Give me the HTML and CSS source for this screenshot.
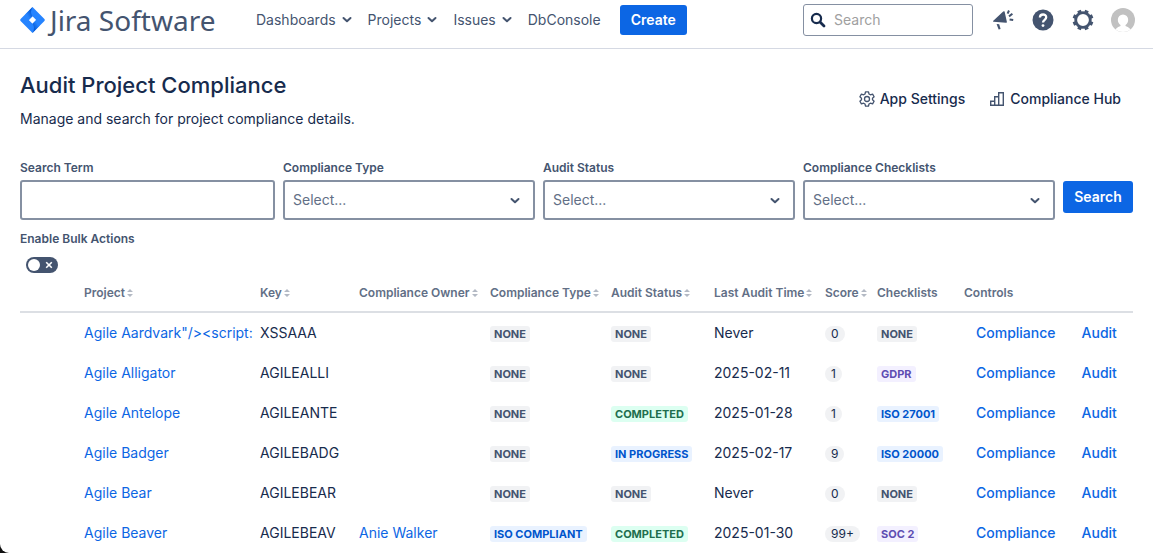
FILE: index.html
```html
<!DOCTYPE html>
<html lang="en">
<head>
    <meta charset="UTF-8">
    <meta name="viewport" content="width=device-width, initial-scale=1.0">
    <title>Audit Project Compliance - Jira Software</title>
    <link rel="stylesheet" href="styles.css">
</head>
<body>
    <!-- Shared icons -->
    <svg class="sprite" aria-hidden="true">
        <symbol id="chevron" viewBox="0 0 10 8">
            <path d="M1.5 2 L5 5.3 L8.5 2" fill="none" stroke="currentColor" stroke-width="2" stroke-linecap="round" stroke-linejoin="round"/>
        </symbol>
        <symbol id="sort" viewBox="0 0 6 8">
            <path d="M3 0 L6 3 H0 Z M3 8 L0 5 H6 Z" fill="currentColor"/>
        </symbol>
    </svg>

    <!-- Top navigation -->
    <header class="topbar">
        <a class="logo" href="#">
            <svg width="25" height="26" viewBox="0 0 25 26">
                <defs>
                    <linearGradient id="g1" x1="0.9" y1="0" x2="0.3" y2="0.7">
                        <stop offset="0.2" stop-color="#0052cc"/>
                        <stop offset="1" stop-color="#2684ff"/>
                    </linearGradient>
                    <linearGradient id="g2" x1="0.1" y1="1" x2="0.7" y2="0.3">
                        <stop offset="0.2" stop-color="#0052cc"/>
                        <stop offset="1" stop-color="#2684ff"/>
                    </linearGradient>
                </defs>
                <path d="M12.5 0 L24.4 12 Q25.2 13 24.4 14 L12.5 26 L0.6 14 Q-0.2 13 0.6 12 Z M12.5 9.3 L8.8 13 L12.5 16.7 L16.2 13 Z" fill="#2684ff" fill-rule="evenodd"/>
                <path d="M12.5 0 Q9.5 5 12.5 9.3 L8.8 13 L5.5 7.2 Z" fill="url(#g1)"/>
                <path d="M12.5 26 Q15.5 21 12.5 16.7 L16.2 13 L19.5 18.8 Z" fill="url(#g2)"/>
            </svg>
            <span>Jira Software</span>
        </a>
        <nav>
            <a href="#">Dashboards <svg class="chevron"><use href="#chevron"/></svg></a>
            <a href="#">Projects <svg class="chevron"><use href="#chevron"/></svg></a>
            <a href="#">Issues <svg class="chevron"><use href="#chevron"/></svg></a>
            <a href="#">DbConsole</a>
        </nav>
        <button class="button create">Create</button>
        <div class="tools">
            <div class="quick-search">
                <svg width="16" height="16" viewBox="0 0 16 16">
                    <circle cx="6.5" cy="6.5" r="4.6" fill="none" stroke="#172b4d" stroke-width="2.2"/>
                    <path d="M10 10 L14 14" stroke="#172b4d" stroke-width="2.8" stroke-linecap="round"/>
                </svg>
                <input type="text" placeholder="Search" aria-label="Quick search">
            </div>
            <a href="#" aria-label="Feedback">
                <svg width="22" height="22" viewBox="0 0 22 22" fill="#44546f">
                    <path d="M12.6 2.6 L14.9 13 Q15 13.9 14.1 13.8 L1.4 12.8 Q0.6 12.4 1.3 11.8 L11.2 2.6 Q12.2 1.8 12.6 2.6 Z"/>
                    <path d="M4.6 14.9 L7.2 15.2 L8.6 20 L6.6 20.6 Z"/>
                    <path d="M15.6 4.6 L17 1.5 M17 7.4 L20.4 4.8 M17.6 10.4 L21.2 11" fill="none" stroke="#44546f" stroke-width="2"/>
                </svg>
            </a>
            <a href="#" aria-label="Help">
                <svg width="22" height="22" viewBox="0 0 22 22">
                    <circle cx="11" cy="11" r="10.5" fill="#44546f"/>
                    <path d="M7.9 8.6 C7.9 4.4 14.2 4.6 14.2 8.3 C14.2 10.8 11 10.8 11 13.6" fill="none" stroke="#fff" stroke-width="2.3"/>
                    <circle cx="11" cy="16.6" r="1.4" fill="#fff"/>
                </svg>
            </a>
            <a href="#" aria-label="Administration">
                <svg width="22" height="22" viewBox="0 0 22 22">
                    <circle cx="11" cy="11" r="7.3" fill="none" stroke="#44546f" stroke-width="2.8"/>
                    <path d="M7 1.4 L8.2 4.3 M15 1.4 L13.8 4.3 M7 20.6 L8.2 17.7 M15 20.6 L13.8 17.7 M1.4 7 L4.3 8.2 M20.6 7 L17.7 8.2 M1.4 15 L4.3 13.8 M20.6 15 L17.7 13.8" stroke="#44546f" stroke-width="3.8"/>
                </svg>
            </a>
            <a href="#" aria-label="Profile">
                <svg width="24" height="24" viewBox="0 0 24 24">
                    <defs><clipPath id="round"><circle cx="12" cy="12" r="12"/></clipPath></defs>
                    <g clip-path="url(#round)">
                        <rect width="24" height="24" fill="#c1c1c1"/>
                        <ellipse cx="12" cy="12" rx="5.2" ry="5.6" fill="#fff"/>
                        <path d="M9.5 15 H14.5 V18 Q19.5 19.5 20.5 24 H3.5 Q4.5 19.5 9.5 18 Z" fill="#fff"/>
                    </g>
                </svg>
            </a>
        </div>
    </header>

    <main>
        <div class="page-header">
            <div>
                <h1>Audit Project Compliance</h1>
                <p>Manage and search for project compliance details.</p>
            </div>
            <div class="page-links">
                <a href="#">
                    <svg width="16" height="16" viewBox="0 0 16 16" fill="none" stroke="#44546f" stroke-width="1.3" stroke-linejoin="round">
                        <path d="M6.5 0.8 H9.5 L10 3 L11.4 3.8 L13.6 3.1 L15.1 5.7 L13.5 7.2 V8.8 L15.1 10.3 L13.6 12.9 L11.4 12.2 L10 13 L9.5 15.2 H6.5 L6 13 L4.6 12.2 L2.4 12.9 L0.9 10.3 L2.5 8.8 V7.2 L0.9 5.7 L2.4 3.1 L4.6 3.8 L6 3 Z"/>
                        <circle cx="8" cy="8" r="2.5"/>
                    </svg>
                    App Settings
                </a>
                <a href="#">
                    <svg width="16" height="16" viewBox="0 0 16 16" fill="none" stroke="#44546f" stroke-width="1.4">
                        <path d="M1.7 14.3 V10.2 H5.7 V14.3 Z M5.7 14.3 V5.7 H9.7 V14.3 M9.7 14.3 V1.7 H14.3 V14.3 H5.7"/>
                    </svg>
                    Compliance Hub
                </a>
            </div>
        </div>

        <!-- Filters -->
        <form class="filters">
            <div class="field">
                <label for="term">Search Term</label>
                <input type="text" id="term">
            </div>
            <div class="field">
                <label for="type">Compliance Type</label>
                <div class="select">
                    <select id="type"><option>Select...</option></select>
                    <svg class="chevron"><use href="#chevron"/></svg>
                </div>
            </div>
            <div class="field">
                <label for="status">Audit Status</label>
                <div class="select">
                    <select id="status"><option>Select...</option></select>
                    <svg class="chevron"><use href="#chevron"/></svg>
                </div>
            </div>
            <div class="field">
                <label for="checklists">Compliance Checklists</label>
                <div class="select">
                    <select id="checklists"><option>Select...</option></select>
                    <svg class="chevron"><use href="#chevron"/></svg>
                </div>
            </div>
            <button type="button" class="button">Search</button>
        </form>

        <div class="bulk">
            <label for="bulk">Enable Bulk Actions</label>
            <div class="toggle">
                <input type="checkbox" id="bulk">
                <svg width="8" height="8" viewBox="0 0 8 8"><path d="M1.2 1.2 L6.8 6.8 M6.8 1.2 L1.2 6.8" stroke="#fff" stroke-width="1.6"/></svg>
            </div>
        </div>

        <!-- Results -->
        <table>
            <colgroup>
                <col class="col-check">
                <col class="col-project">
                <col class="col-key">
                <col class="col-owner">
                <col class="col-type">
                <col class="col-status">
                <col class="col-time">
                <col class="col-score">
                <col class="col-lists">
                <col class="col-controls">
            </colgroup>
            <thead>
                <tr>
                    <th></th>
                    <th>Project<svg class="sort"><use href="#sort"/></svg></th>
                    <th>Key<svg class="sort"><use href="#sort"/></svg></th>
                    <th>Compliance Owner<svg class="sort"><use href="#sort"/></svg></th>
                    <th>Compliance Type<svg class="sort"><use href="#sort"/></svg></th>
                    <th>Audit Status<svg class="sort"><use href="#sort"/></svg></th>
                    <th>Last Audit Time<svg class="sort"><use href="#sort"/></svg></th>
                    <th>Score<svg class="sort"><use href="#sort"/></svg></th>
                    <th>Checklists</th>
                    <th>Controls</th>
                </tr>
            </thead>
            <tbody>
                <tr>
                    <td></td>
                    <td><a href="#">Agile Aardvark"/&gt;&lt;script:</a></td>
                    <td>XSSAAA</td>
                    <td></td>
                    <td><span class="lozenge">None</span></td>
                    <td><span class="lozenge">None</span></td>
                    <td>Never</td>
                    <td><span class="badge">0</span></td>
                    <td><span class="lozenge">None</span></td>
                    <td class="controls"><a href="#">Compliance</a><a href="#">Audit</a></td>
                </tr>
                <tr>
                    <td></td>
                    <td><a href="#">Agile Alligator</a></td>
                    <td>AGILEALLI</td>
                    <td></td>
                    <td><span class="lozenge">None</span></td>
                    <td><span class="lozenge">None</span></td>
                    <td>2025-02-11</td>
                    <td><span class="badge">1</span></td>
                    <td><span class="lozenge purple">GDPR</span></td>
                    <td class="controls"><a href="#">Compliance</a><a href="#">Audit</a></td>
                </tr>
                <tr>
                    <td></td>
                    <td><a href="#">Agile Antelope</a></td>
                    <td>AGILEANTE</td>
                    <td></td>
                    <td><span class="lozenge">None</span></td>
                    <td><span class="lozenge green">Completed</span></td>
                    <td>2025-01-28</td>
                    <td><span class="badge">1</span></td>
                    <td><span class="lozenge blue">ISO 27001</span></td>
                    <td class="controls"><a href="#">Compliance</a><a href="#">Audit</a></td>
                </tr>
                <tr>
                    <td></td>
                    <td><a href="#">Agile Badger</a></td>
                    <td>AGILEBADG</td>
                    <td></td>
                    <td><span class="lozenge">None</span></td>
                    <td><span class="lozenge blue">In progress</span></td>
                    <td>2025-02-17</td>
                    <td><span class="badge">9</span></td>
                    <td><span class="lozenge blue">ISO 20000</span></td>
                    <td class="controls"><a href="#">Compliance</a><a href="#">Audit</a></td>
                </tr>
                <tr>
                    <td></td>
                    <td><a href="#">Agile Bear</a></td>
                    <td>AGILEBEAR</td>
                    <td></td>
                    <td><span class="lozenge">None</span></td>
                    <td><span class="lozenge">None</span></td>
                    <td>Never</td>
                    <td><span class="badge">0</span></td>
                    <td><span class="lozenge">None</span></td>
                    <td class="controls"><a href="#">Compliance</a><a href="#">Audit</a></td>
                </tr>
                <tr>
                    <td></td>
                    <td><a href="#">Agile Beaver</a></td>
                    <td>AGILEBEAV</td>
                    <td><a href="#">Anie Walker</a></td>
                    <td><span class="lozenge blue">ISO compliant</span></td>
                    <td><span class="lozenge green">Completed</span></td>
                    <td>2025-01-30</td>
                    <td><span class="badge">99+</span></td>
                    <td><span class="lozenge purple">SOC 2</span></td>
                    <td class="controls"><a href="#">Compliance</a><a href="#">Audit</a></td>
                </tr>
            </tbody>
        </table>
    </main>
</body>
</html>
```
FILE: styles.css
```css
* {
    box-sizing: border-box;
}

html {
    background: #111;
}

body {
    margin: 0;
    min-height: 100vh;
    background: #fff;
    border-bottom-left-radius: 9px;
    font-family: Inter, "Liberation Sans", sans-serif;
    font-size: 14px;
    line-height: 20px;
    color: #172b4d;
}

a {
    color: #0c66e4;
    text-decoration: none;
}

svg {
    display: block;
    flex: none;
}

input, select, button {
    font: inherit;
    color: inherit;
}

.sprite {
    position: absolute;
    width: 0;
    height: 0;
}

.chevron {
    width: 10px;
    height: 8px;
}

.button {
    height: 32px;
    padding: 0 11px;
    border: none;
    border-radius: 3px;
    background: #0c66e4;
    color: #fff;
    font-weight: 600;
    cursor: pointer;
}

/* Top navigation */
.topbar {
    display: flex;
    align-items: center;
    padding: 4px 18px 12px 20px;
    border-bottom: 1px solid #d5d9e3;
}

.logo {
    display: flex;
    align-items: center;
    gap: 5px;
    width: 236px;
    height: 32px;
    color: #44546f;
    font-family: "Noto Sans", sans-serif;
    font-size: 28px;
    white-space: nowrap;
}

nav {
    display: flex;
    gap: 16px;
}

nav a {
    display: flex;
    align-items: center;
    gap: 6px;
    color: #44546f;
}

.create {
    height: 30px;
    margin-left: 19px;
}

.tools {
    display: flex;
    align-items: center;
    gap: 16px;
    margin-left: auto;
}

.tools a {
    display: flex;
    justify-content: center;
    width: 24px;
}

.quick-search {
    display: flex;
    align-items: center;
    gap: 8px;
    width: 170px;
    height: 32px;
    padding: 0 6px;
    margin-right: 2px;
    border: 1px solid #8590a2;
    border-radius: 3px;
}

.quick-search input {
    width: 100%;
    min-width: 0;
    padding: 0;
    border: none;
    outline: none;
    background: none;
}

.quick-search input::placeholder {
    color: #a0a0a0;
}

/* Page header */
main {
    padding: 20px 20px 0;
}

.page-header {
    display: flex;
    justify-content: space-between;
    align-items: center;
}

h1 {
    margin: 0 0 8px;
    font-size: 22px;
    line-height: 32px;
    font-weight: 500;
}

p {
    margin: 0;
}

.page-links {
    display: flex;
    gap: 24px;
    margin-right: 12px;
}

.page-links a {
    display: flex;
    align-items: center;
    gap: 5px;
    color: #172b4d;
    font-weight: 500;
}

/* Filters */
.filters {
    display: grid;
    grid-template-columns: 255fr 252fr 252fr 252fr auto;
    gap: 8px;
    margin-top: 31px;
}

.filters .button {
    width: 70px;
    margin-top: 21px;
}

label {
    display: block;
    color: #44546f;
    font-size: 12px;
    line-height: 16px;
    font-weight: 600;
}

.field label {
    margin-bottom: 4px;
}

.field input,
.field select {
    width: 100%;
    height: 40px;
    padding: 0 8px;
    border: 2px solid #8590a2;
    border-radius: 3px;
    background: #fff;
    color: #626f86;
    appearance: none;
}

.select {
    position: relative;
}

.select .chevron {
    position: absolute;
    top: 17px;
    right: 15px;
    color: #44546f;
    pointer-events: none;
}

.bulk {
    margin-top: 11px;
}

.toggle {
    position: relative;
    width: 32px;
    margin: 10px 6px 0;
}

.toggle input {
    display: block;
    width: 32px;
    height: 16px;
    margin: 0;
    padding: 2px;
    border-radius: 8px;
    background: #44546f;
    appearance: none;
}

.toggle input::before {
    content: "";
    display: block;
    width: 12px;
    height: 12px;
    border-radius: 50%;
    background: #fff;
}

.toggle svg {
    position: absolute;
    top: 4px;
    right: 5px;
    pointer-events: none;
}

/* Results table */
table {
    width: 100%;
    margin-top: 8px;
    border-collapse: separate;
    border-spacing: 0;
    table-layout: fixed;
}

.col-check { width: 56px; }
.col-project { width: 176px; }
.col-key { width: 99px; }
.col-owner { width: 131px; }
.col-type { width: 121px; }
.col-status { width: 103px; }
.col-time { width: 111px; }
.col-score { width: 52px; }
.col-lists { width: 87px; }
.col-controls { width: 177px; }

th {
    height: 32px;
    padding: 4px 0 10px 8px;
    border-bottom: 2px solid #dcdfe4;
    color: #626f86;
    font-size: 12px;
    line-height: 16px;
    font-weight: 600;
    text-align: left;
    white-space: nowrap;
}

.sort {
    display: inline-block;
    width: 6px;
    height: 8px;
    margin-left: 2px;
    color: #b3b9c4;
}

td {
    height: 40px;
    padding: 0 0 0 8px;
    white-space: nowrap;
}

.lozenge,
.badge {
    display: inline-block;
    height: 16px;
    background: #f1f2f4;
    line-height: 16px;
    vertical-align: middle;
}

.lozenge {
    padding: 0 4px;
    border-radius: 3px;
    color: #44546f;
    font-size: 11px;
    font-weight: 700;
    text-transform: uppercase;
}

.lozenge.blue {
    background: #e9f2ff;
    color: #0055cc;
}

.lozenge.green {
    background: #dcfff1;
    color: #216e4e;
}

.lozenge.purple {
    background: #f3f0ff;
    color: #5e4db2;
}

.badge {
    padding: 0 6px;
    border-radius: 8px;
    font-size: 12px;
}

.controls a {
    margin: 0 14px 0 12px;
    font-weight: 500;
}
```
